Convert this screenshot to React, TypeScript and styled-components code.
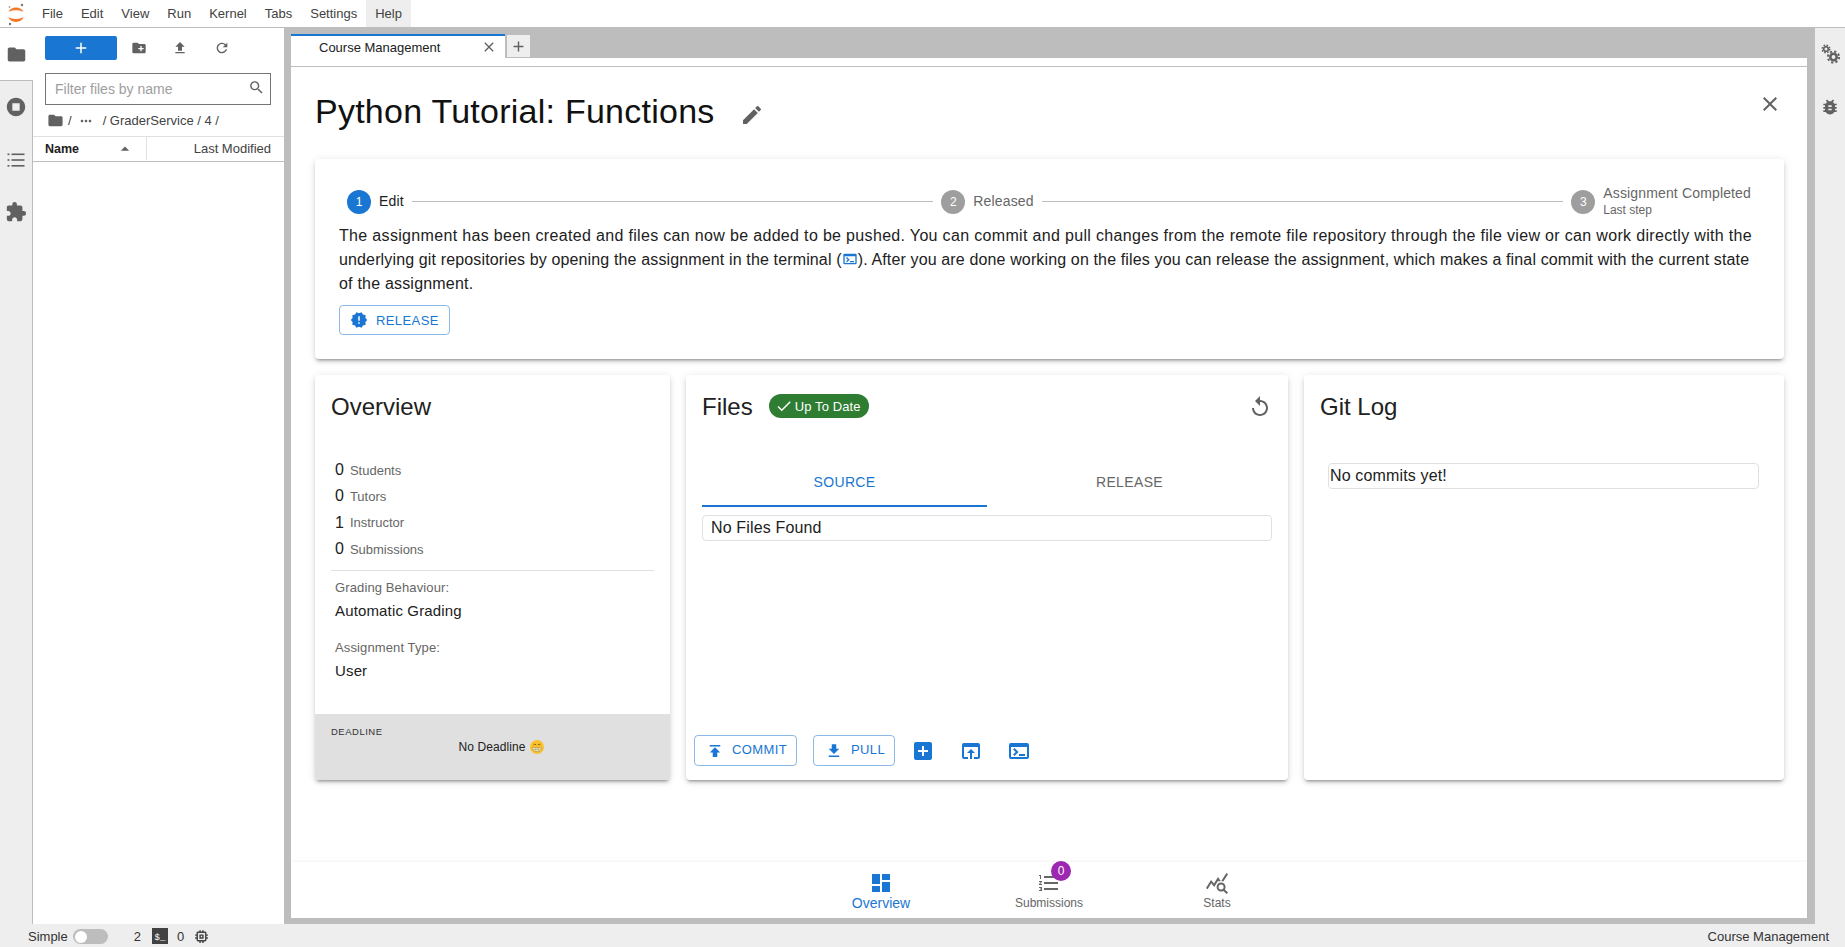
import React from 'react';
import styled, { createGlobalStyle } from 'styled-components';
import {
  MdFolder, MdStopCircle, MdExtension, MdBugReport, MdAdd, MdCreateNewFolder, MdFileUpload, MdRefresh,
  MdSearch, MdMoreHoriz, MdArrowDropUp, MdClose, MdEdit, MdNewReleases, MdTerminal, MdReplay, MdCheck,
  MdPublish, MdFileDownload, MdAddBox, MdOpenInBrowser, MdDashboard, MdFormatListNumbered, MdQueryStats, MdMemory,
} from 'react-icons/md';

const Global = createGlobalStyle`
  html, body { margin: 0; padding: 0; height: 100%; overflow: hidden; }
  #root { height: 100%; }
  * { box-sizing: border-box; }
  body { font-family: "Liberation Sans", Arial, sans-serif; color: #212121; background: #fff; }
`;

const Shell = styled.div`display: flex; flex-direction: column; height: 947px; width: 1845px; overflow: hidden;`;
const TopBar = styled.header`display: flex; align-items: stretch; height: 28px; border-bottom: 1px solid #bdbdbd; background: #fff;`;
const LogoBox = styled.div`width: 33px; display: flex; align-items: center; justify-content: center; padding-right: 1px;`;
const MenuItem = styled.div<{ $active?: boolean }>`
  padding: 0 9px 0 9px; font-size: 13px; display: flex; align-items: center; color: #424242;
  background: ${p => (p.$active ? '#eeeeee' : 'transparent')};
`;
const Middle = styled.div`flex: 1; display: flex; min-height: 0;`;
const LeftRail = styled.nav`width: 33px; background: #eeeeee; display: flex; flex-direction: column; border-right: 1px solid #bdbdbd; position: relative;`;
const RailItem = styled.div<{ $active?: boolean }>`
  height: 52.500px; display: flex; align-items: center; justify-content: center; color: #616161; font-size: 21px;
  background: ${p => (p.$active ? '#fff' : 'transparent')};
  ${p => p.$active ? 'width: 33px; margin-right: -1px; height: 53px; border-bottom: 1px solid #bdbdbd;' : ''}
`;
const Browser = styled.aside`width: 251px; background: #fff; padding: 8px 13px 0 12px; display: flex; flex-direction: column;`;
const BrowserTools = styled.div`display: flex; align-items: center; height: 24px;`;
const NewButton = styled.div`width: 72px; height: 24px; background: #1976d2; border-radius: 2px; color: #fff; display: flex; align-items: center; justify-content: center; font-size: 18px;`;
const ToolIcon = styled.div`width: 41.500px; display: flex; justify-content: center; color: #616161; font-size: 16px; margin-left: 1px; &:nth-child(n+3) { margin-left: 0; }`;
const FilterBox = styled.div`
  margin-top: 13px; height: 32px; border: 1px solid #757575; display: flex; align-items: center; justify-content: space-between;
  padding: 0 5px 0 9px; font-size: 14px; color: #9e9e9e;
  svg { color: #616161; font-size: 17px; margin-top: -3px; }
`;
const Crumbs = styled.div`height: 31px; display: flex; align-items: center; gap: 4px; font-size: 13px; color: #424242; padding-left: 2px; svg { color: #616161; }`;
const CrumbDots = styled(MdMoreHoriz)`margin: 0 5px 0 2px;`;
const ListHeader = styled.div`margin: 0 -13px 0 -12px; height: 26px; border-top: 1px solid #e0e0e0; border-bottom: 1px solid #bdbdbd; display: flex; font-size: 13px; color: #212121; align-items: stretch; padding-bottom: 1px;`;
const NameCol = styled.div`width: 114px; padding: 0 0 0 12px; font-size: 12.500px; font-weight: 700; display: flex; align-items: center; justify-content: space-between; border-right: 1px solid #e0e0e0; svg { color: #616161; font-size: 20px; margin-right: 11px; }`;
const ModCol = styled.div`flex: 1; display: flex; align-items: center; justify-content: flex-end; padding-right: 13px; color: #424242;`;

const Workspace = styled.main`flex: 1; min-width: 0; background: #bdbdbd; padding: 6px 8px 6px 7px; display: flex; flex-direction: column;`;
const TabBar = styled.div`display: flex; height: 24px; flex: none;`;
const Tab = styled.div`
  width: 214px; background: #fff; border-top: 2px solid #1976d2; display: flex; align-items: center; justify-content: space-between;
  padding: 0 8px 0 28px; font-size: 13px; color: #212121; svg { font-size: 16px; color: #616161; }
`;
const AddTab = styled.div`width: 25px; margin-left: 1px; background: #eeeeee; border: 1px solid #bdbdbd; color: #616161; display: flex; align-items: center; justify-content: center; font-size: 17px;`;
const Panel = styled.div`flex: 1; min-height: 0; background: #fff; display: flex; flex-direction: column; padding-top: 8px;`;
const PanelBody = styled.div`flex: 1; min-height: 0; border-top: 1px solid #bdbdbd; padding: 24px 23px 0 24px;`;
const TitleRow = styled.div`display: flex; align-items: flex-start; height: 42px; margin-bottom: 26px;`;
const Title = styled.h1`margin: -1px 0 0; font-size: 34px; font-weight: 400; line-height: 42px; letter-spacing: .25px; color: #111;`;
const EditBtn = styled.div`margin: 12px 0 0 25px; color: #616161; font-size: 24px; line-height: 0;`;
const CloseBtn = styled.div`margin: 1px 2px 0 auto; color: #616161; font-size: 24px; line-height: 0;`;

const cardShadow = '0 3px 3px -2px rgba(0,0,0,.35), 0 3px 4px 0 rgba(0,0,0,.1), 0 1px 8px 0 rgba(0,0,0,.1)';
const StepCard = styled.section`background: #fff; border-radius: 4px; box-shadow: ${cardShadow}; padding: 21px 24px 24px;`;
const Stepper = styled.div`display: flex; align-items: center; height: 43px; padding: 0 9px 0 8px;`;
const Step = styled.div`display: flex; align-items: center; gap: 8px; flex: none;`;
const StepDot = styled.div<{ $active?: boolean }>`width: 24px; height: 24px; border-radius: 50%; background: ${p => (p.$active ? '#1976d2' : '#9e9e9e')}; color: #fff; font-size: 12px; display: flex; align-items: center; justify-content: center;`;
const StepName = styled.div<{ $active?: boolean }>`font-size: 14px; line-height: 17px; letter-spacing: .15px; color: ${p => (p.$active ? '#212121' : '#666')};`;
const StepNote = styled.div`font-size: 12px; line-height: 16px; color: #666;`;
const Connector = styled.div`flex: 1; height: 1px; background: #bdbdbd; margin: 0 8px;`;
const Body = styled.p`margin: 1px 0 0; font-size: 16px; line-height: 24px; color: #212121; svg { vertical-align: -2px; color: #1976d2; font-size: 16px; }`;
const BodyLine = styled.span<{ $ls: number }>`display: block; white-space: nowrap; letter-spacing: ${p => p.$ls}px;`;
const Outlined = styled.div`
  display: inline-flex; align-items: center; gap: 8px; height: 30px; padding: 0 10px; font-size: 13px; letter-spacing: .4px;
  color: #1976d2; border: 1px solid rgba(25,118,210,.5); border-radius: 4px; svg { font-size: 18px; flex: none; }
`;
const ReleaseBtn = styled(Outlined)`margin-top: 9px; width: 111px;`;

const CardRow = styled.div`display: grid; grid-template-columns: 355px 602px 480px; gap: 16px; margin-top: 16px;`;
const Card = styled.section`height: 405px; background: #fff; border-radius: 4px; box-shadow: ${cardShadow}; display: flex; flex-direction: column; overflow: hidden;`;
const CardTitle = styled.h2`margin: 0; font-size: 24px; font-weight: 400; line-height: 32px; color: #212121;`;
const CardHead = styled.div`display: flex; align-items: center; padding: 16px 16px 0;`;
const OverviewBody = styled.div`padding: 34px 16px 0;`;
const StatRow = styled.div`height: 26.300px; display: flex; align-items: center; gap: 6px; padding-left: 4px; font-size: 16px; color: #212121;`;
const StatLabel = styled.span`font-size: 13px; color: #666;`;
const Rule = styled.hr`margin: 8px 0 7px; border: 0; border-top: 1px solid #e0e0e0;`;
const InfoLabel = styled.div`padding-left: 4px; font-size: 13px; line-height: 20px; letter-spacing: .12px; color: #666;`;
const InfoValue = styled.div`padding-left: 4px; font-size: 15px; line-height: 24px; letter-spacing: .15px; margin: 1px 0 15px; color: #212121;`;
const DeadlineBox = styled.div`margin-top: auto; height: 66px; background: #e0e0e0; padding: 12px 16px 0;`;
const Overline = styled.div`font-size: 9.500px; letter-spacing: .5px; line-height: 12px; color: #333;`;
const DeadlineText = styled.div`padding-left: 17px; text-align: center; font-size: 12px; letter-spacing: .1px; line-height: 16px; margin-top: 1px; color: #212121;`;
const Chip = styled.div`margin: 0 0 2px 16px; height: 24px; width: 100px; border-radius: 12px; background: #2e7d32; color: #fff; font-size: 13px; letter-spacing: .1px; display: flex; align-items: center; justify-content: center; gap: 2px; padding-right: 2px; svg { font-size: 18px; }`;
const ReloadBtn = styled.div`margin-left: auto; color: #616161; font-size: 24px; line-height: 0;`;
const TabsRow = styled.div`margin: 36px 16px 0; display: grid; grid-template-columns: 1fr 1fr; height: 48px;`;
const FileTab = styled.div<{ $active?: boolean }>`
  display: flex; align-items: center; justify-content: center; font-size: 14px; letter-spacing: .35px;
  color: ${p => (p.$active ? '#1976d2' : '#666')};
  border-bottom: 2px solid ${p => (p.$active ? '#1976d2' : 'transparent')};
`;
const EmptyBox = styled.div<{ $mx?: string; $pl?: number }>`height: 26px; border: 1px solid #e0e0e0; border-radius: 4px; font-size: 16px; letter-spacing: .15px; line-height: 24px; padding-left: ${p => p.$pl ?? 8}px; color: #212121; margin: ${p => p.$mx || '8px 16px 0'};`;
const Actions = styled.div`margin-top: auto; padding: 0 0 14px 8px; display: flex; align-items: center;`;
const ActionBtn = styled(Outlined)<{ $w: number }>`width: ${p => p.$w}px; height: 31px; margin-right: 16px; padding: 0 9px 2px 11px; gap: 8px; color: #1976d2; svg { margin-top: 2px; }`;
const IconAction = styled.div`width: 24px; height: 24px; color: #1976d2; font-size: 24px; line-height: 0; margin-right: 24px;`;
const BottomNav = styled.nav`height: 56px; flex: none; background: #fff; box-shadow: 0 -1px 2px rgba(0,0,0,.05); display: flex; justify-content: center;`;
const NavItem = styled.div<{ $active?: boolean }>`
  width: 168px; display: flex; flex-direction: column; align-items: center; padding-top: 9px;
  color: ${p => (p.$active ? '#1976d2' : '#666')}; font-size: ${p => (p.$active ? '14px' : '12px')};
  span { line-height: 16px; }
`;
const NavIcon = styled.div`position: relative; width: 24px; height: 24px; font-size: 24px; line-height: 0;`;
const Badge = styled.div`position: absolute; top: -10px; right: -10px; width: 20px; height: 20px; border-radius: 50%; background: #9c27b0; color: #fff; font-size: 12px; line-height: 20px; text-align: center;`;
const RightRail = styled.aside`width: 30px; background: #eeeeee; display: flex; flex-direction: column; align-items: center;`;
const RightIcon = styled.div`height: 52.500px; display: flex; align-items: center; justify-content: center; color: #616161; font-size: 20px;`;
const StatusBar = styled.footer`height: 23px; background: #eeeeee; display: flex; align-items: center; font-size: 13px; color: #333; padding: 1px 16px 0 28px;`;
const SwitchTrack = styled.div`margin-left: 5px; width: 35px; height: 15px; border-radius: 8px; background: #bdbdbd; padding: 2px 0 0 2px;`;
const SwitchThumb = styled.div`width: 12px; height: 12px; border-radius: 50%; background: #fff;`;
const StatusNum = styled.span<{ $ml: number }>`margin-left: ${p => p.$ml}px;`;
const TermBadge = styled.div`margin-left: 11px; width: 16px; height: 16px; background: #424242; color: #fff; font-size: 9px; font-family: "Liberation Mono", monospace; display: flex; align-items: flex-end; justify-content: center; padding-bottom: 1px;`;
const ChipIcon = styled.div`margin-left: 9px; font-size: 17px; line-height: 0; color: #424242;`;
const StatusRight = styled.div`margin-left: auto;`;
const Emoji = styled.svg`width: 14px; height: 14px; vertical-align: -3px; margin-left: 4px;`;

const JupyterLogo = () => (
  <svg width="18" height="24" viewBox="0 0 18 24">
    <path d="M1.500 10 C3.500 4 14.500 4 16.500 10 C13.500 7.800 4.500 7.800 1.500 10Z" fill="#f37726" />
    <path d="M1.500 15 C3.500 21.500 14.500 21.500 16.500 15 C13.500 17.500 4.500 17.500 1.500 15Z" fill="#f37726" />
    <circle cx="15" cy="3" r="1.200" fill="#767677" />
    <circle cx="2.500" cy="5" r=".8" fill="#767677" />
    <circle cx="3" cy="22" r="1.200" fill="#767677" />
  </svg>
);

const TocIcon = () => (
  <svg width="20" height="20" viewBox="0 0 20 20" fill="#616161">
    <rect x="5.500" y="3.500" width="13" height="1.600" /><rect x="5.500" y="9.200" width="13" height="1.600" /><rect x="5.500" y="15" width="13" height="1.600" />
    <rect x="1.500" y="3.500" width="2" height="1.600" /><rect x="1.500" y="9.200" width="2" height="1.600" /><rect x="1.500" y="15" width="2" height="1.600" />
  </svg>
);

const Gears = () => (
  <svg width="22" height="22" viewBox="0 0 22 22" fill="none" stroke="#616161">
    <circle cx="7" cy="6" r="2.300" strokeWidth="1.600" />
    <circle cx="7" cy="6" r="3.800" strokeWidth="1.400" strokeDasharray="1.600 1.400" />
    <circle cx="14.500" cy="14" r="3.200" strokeWidth="2.600" />
    <circle cx="14.500" cy="14" r="5.600" strokeWidth="2" strokeDasharray="2.200 2.200" />
  </svg>
);

const Grin = () => (
  <Emoji viewBox="0 0 16 16">
    <circle cx="8" cy="8" r="8" fill="#fbc02d" />
    <path d="M3 8.500h10c0 3-2.200 4.800-5 4.800S3 11.500 3 8.500Z" fill="#fff" stroke="#8d6e00" strokeWidth=".5" />
    <path d="M3.500 10.500h9M6 8.700v4.300M8 8.700v4.500M10 8.700v4.300" stroke="#8d6e00" strokeWidth=".5" />
    <path d="M4 5.500q1.500-1.500 3 0M9 5.500q1.500-1.500 3 0" stroke="#6d4c00" strokeWidth=".9" fill="none" />
  </Emoji>
);

const menus = ['File', 'Edit', 'View', 'Run', 'Kernel', 'Tabs', 'Settings', 'Help'];
const stats: [string, string][] = [['0', 'Students'], ['0', 'Tutors'], ['1', 'Instructor'], ['0', 'Submissions']];

export default function App() {
  return (
    <Shell>
      <Global />
      <TopBar>
        <LogoBox><JupyterLogo /></LogoBox>
        {menus.map(m => <MenuItem key={m} $active={m === 'Help'}>{m}</MenuItem>)}
      </TopBar>
      <Middle>
        <LeftRail>
          <RailItem $active><MdFolder /></RailItem>
          <RailItem><MdStopCircle size={22} /></RailItem>
          <RailItem><TocIcon /></RailItem>
          <RailItem><MdExtension size={22} /></RailItem>
        </LeftRail>
        <Browser>
          <BrowserTools>
            <NewButton><MdAdd /></NewButton>
            <ToolIcon><MdCreateNewFolder /></ToolIcon>
            <ToolIcon><MdFileUpload /></ToolIcon>
            <ToolIcon><MdRefresh /></ToolIcon>
          </BrowserTools>
          <FilterBox>Filter files by name<MdSearch /></FilterBox>
          <Crumbs><MdFolder size={17} /><span>/</span><CrumbDots size={16} /><span>/ GraderService / 4 /</span></Crumbs>
          <ListHeader>
            <NameCol>Name<MdArrowDropUp /></NameCol>
            <ModCol>Last Modified</ModCol>
          </ListHeader>
        </Browser>
        <Workspace>
          <TabBar>
            <Tab>Course Management<MdClose /></Tab>
            <AddTab><MdAdd /></AddTab>
          </TabBar>
          <Panel>
            <PanelBody>
              <TitleRow>
                <Title>Python Tutorial: Functions</Title>
                <EditBtn><MdEdit /></EditBtn>
                <CloseBtn><MdClose /></CloseBtn>
              </TitleRow>
              <StepCard>
                <Stepper>
                  <Step><StepDot $active>1</StepDot><StepName $active>Edit</StepName></Step>
                  <Connector />
                  <Step><StepDot>2</StepDot><StepName>Released</StepName></Step>
                  <Connector />
                  <Step><StepDot>3</StepDot><div><StepName>Assignment Completed</StepName><StepNote>Last step</StepNote></div></Step>
                </Stepper>
                <Body>
                  <BodyLine $ls={0.33}>The assignment has been created and files can now be added to be pushed. You can commit and pull changes from the remote file repository through the file view or can work directly with the</BodyLine>
                  <BodyLine $ls={0.14}>underlying git repositories by opening the assignment in the terminal (<MdTerminal />). After you are done working on the files you can release the assignment, which makes a final commit with the current state</BodyLine>
                  <BodyLine $ls={0.2}>of the assignment.</BodyLine>
                </Body>
                <ReleaseBtn><MdNewReleases />RELEASE</ReleaseBtn>
              </StepCard>
              <CardRow>
                <Card>
                  <CardHead><CardTitle>Overview</CardTitle></CardHead>
                  <OverviewBody>
                    {stats.map(([n, l]) => <StatRow key={l}>{n}<StatLabel>{l}</StatLabel></StatRow>)}
                    <Rule />
                    <InfoLabel>Grading Behaviour:</InfoLabel>
                    <InfoValue>Automatic Grading</InfoValue>
                    <InfoLabel>Assignment Type:</InfoLabel>
                    <InfoValue>User</InfoValue>
                  </OverviewBody>
                  <DeadlineBox>
                    <Overline>DEADLINE</Overline>
                    <DeadlineText>No Deadline<Grin /></DeadlineText>
                  </DeadlineBox>
                </Card>
                <Card>
                  <CardHead>
                    <CardTitle>Files</CardTitle>
                    <Chip><MdCheck />Up To Date</Chip>
                    <ReloadBtn><MdReplay /></ReloadBtn>
                  </CardHead>
                  <TabsRow>
                    <FileTab $active>SOURCE</FileTab>
                    <FileTab>RELEASE</FileTab>
                  </TabsRow>
                  <EmptyBox>No Files Found</EmptyBox>
                  <Actions>
                    <ActionBtn $w={103}><MdPublish />COMMIT</ActionBtn>
                    <ActionBtn $w={82}><MdFileDownload />PULL</ActionBtn>
                    <IconAction><MdAddBox /></IconAction>
                    <IconAction><MdOpenInBrowser /></IconAction>
                    <IconAction><MdTerminal /></IconAction>
                  </Actions>
                </Card>
                <Card>
                  <CardHead><CardTitle>Git Log</CardTitle></CardHead>
                  <EmptyBox $mx="40px 25px 0 24px" $pl={1}>No commits yet!</EmptyBox>
                </Card>
              </CardRow>
            </PanelBody>
            <BottomNav>
              <NavItem $active><NavIcon><MdDashboard /></NavIcon><span>Overview</span></NavItem>
              <NavItem><NavIcon><MdFormatListNumbered /><Badge>0</Badge></NavIcon><span>Submissions</span></NavItem>
              <NavItem><NavIcon><MdQueryStats /></NavIcon><span>Stats</span></NavItem>
            </BottomNav>
          </Panel>
        </Workspace>
        <RightRail>
          <RightIcon><Gears /></RightIcon>
          <RightIcon><MdBugReport /></RightIcon>
        </RightRail>
      </Middle>
      <StatusBar>
        Simple
        <SwitchTrack><SwitchThumb /></SwitchTrack>
        <StatusNum $ml={26}>2</StatusNum>
        <TermBadge>$_</TermBadge>
        <StatusNum $ml={9}>0</StatusNum>
        <ChipIcon><MdMemory /></ChipIcon>
        <StatusRight>Course Management</StatusRight>
      </StatusBar>
    </Shell>
  );
}
